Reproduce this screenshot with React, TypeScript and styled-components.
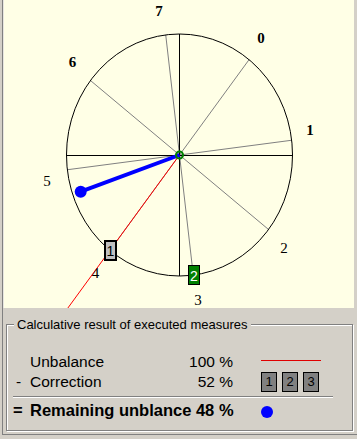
import React from "react";
import styled, { createGlobalStyle } from "styled-components";

const GlobalStyle = createGlobalStyle`
  html, body {
    margin: 0;
    padding: 0;
    background: #d4d0c8;
  }
  body {
    font-family: "Liberation Sans", Arial, sans-serif;
    color: #000;
  }
`;

const Frame = styled.div`
  box-sizing: border-box;
  width: 355px;
  height: 435px;
  margin-left: 2px;
  border-left: 1px solid #808080;
  border-bottom: 1px solid #808080;
  display: flex;
  flex-direction: column;
`;

const Canvas = styled.div`
  box-sizing: border-box;
  width: 351px;
  height: 308px;
  border-left: 1px solid #e8e6e0;
  background: #ffffe6;
  overflow: hidden;

  svg {
    display: block;
  }
`;

const GroupBox = styled.div`
  position: relative;
  box-sizing: border-box;
  width: 347px;
  height: 107px;
  margin: 16px 0 0 3px;
  padding: 27px 0 0 6px;
  border: 1px solid #808080;
  box-shadow: inset 1px 1px 0 #fff, 1px 1px 0 #fff;
`;

const Legend = styled.span`
  position: absolute;
  top: -8px;
  left: 7px;
  padding: 0 3px;
  background: #d4d0c8;
  font-size: 13px;
  line-height: 15px;
  white-space: nowrap;
`;

const Rows = styled.div`
  display: grid;
  width: 308px;
  grid-template-columns: 17px 1fr auto 88px;
  grid-template-rows: 20px 20px 8px 20px;
  align-items: center;
  font-size: 15.5px;
`;

const Sign = styled.div<{ $shift?: number; $bold?: boolean }>`
  padding-left: ${(p) => p.$shift ?? 0}px;
  font-weight: ${(p) => (p.$bold ? 700 : 400)};
  font-size: ${(p) => (p.$bold ? 16.5 : 15.5)}px;
`;

const Label = styled.div`
  white-space: nowrap;
`;

const Value = styled.div`
  text-align: right;
  white-space: nowrap;
`;

const Total = styled.div`
  grid-column: 2 / 4;
  font-weight: 700;
  font-size: 16.5px;
  white-space: nowrap;
`;

const Indicator = styled.div`
  display: flex;
  align-items: center;
  gap: 5px;
  margin-left: 28px;
  height: 20px;
`;

const RedLine = styled.div`
  width: 60px;
  height: 1px;
  margin-bottom: 4px;
  background: #e00000;
`;

const StepBox = styled.div`
  box-sizing: border-box;
  width: 16px;
  height: 20px;
  border: 1px solid #000;
  background: #808080;
  font-size: 13px;
  line-height: 18px;
  text-align: center;
`;

const Divider = styled.div`
  grid-column: 1 / -1;
  align-self: start;
  height: 1px;
  margin: 4px -12px 0 0;
  background: #808080;
  box-shadow: 0 1px 0 #fff;
`;

const Dot = styled.div`
  width: 12px;
  height: 12px;
  margin-top: 4px;
  border-radius: 50%;
  background: #0000ff;
`;

const CX = 179.5;
const CY = 155;
const RX = 113;
const RY = 121;

const spokes = Array.from({ length: 8 }, (_, k) => {
  const a = ((-7 + 45 * k) * Math.PI) / 180;
  return { x: CX + RX * Math.sin(a), y: CY - RY * Math.cos(a) };
});

const labels = [
  { t: "7", x: 159, y: 11, bold: true },
  { t: "0", x: 261, y: 38, bold: true },
  { t: "6", x: 72.5, y: 62, bold: true },
  { t: "1", x: 310, y: 130, bold: true },
  { t: "5", x: 47, y: 181, bold: false },
  { t: "2", x: 284, y: 248, bold: false },
  { t: "4", x: 95.5, y: 273, bold: false },
  { t: "3", x: 198, y: 300, bold: false },
];

const Dial = () => (
  <svg width={350} height={308} viewBox="4 0 350 308">
    {spokes.map((p, i) => (
      <line key={i} x1={CX} y1={CY} x2={p.x} y2={p.y} stroke="#808080" strokeWidth={1} />
    ))}
    <line x1={CX - RX} y1={CY + 0.5} x2={CX + RX} y2={CY + 0.5} stroke="#000" strokeWidth={1} />
    <line x1={CX} y1={CY - RY} x2={CX} y2={CY + RY} stroke="#000" strokeWidth={1} />
    <ellipse cx={CX} cy={CY} rx={RX} ry={RY} fill="none" stroke="#000" strokeWidth={1} />
    <line x1={CX} y1={CY} x2={60} y2={318.8} stroke="#ff0000" strokeWidth={1} />
    <line x1={CX} y1={CY} x2={80.7} y2={191.7} stroke="#0000ff" strokeWidth={4} />
    <circle cx={80.7} cy={191.7} r={6} fill="#0000ff" />
    <rect x={105} y={241} width={11} height={19} fill="#c0c0c0" stroke="#000" strokeWidth={2} />
    <text x={110.5} y={251} fontFamily="Liberation Sans, Arial, sans-serif" fontSize={14} textAnchor="middle" dominantBaseline="central" fill="#000">1</text>
    <rect x={188.5} y={265.5} width={11} height={19} fill="#008000" stroke="#000" strokeWidth={1} />
    <text x={194} y={275.5} fontFamily="Liberation Sans, Arial, sans-serif" fontSize={14} textAnchor="middle" dominantBaseline="central" fill="#fff">2</text>
    <circle cx={CX} cy={CY} r={3.5} fill="none" stroke="#008000" strokeWidth={2} />
    {labels.map((l) => (
      <text
        key={l.t}
        x={l.x}
        y={l.y}
        fontFamily="Liberation Serif, Times New Roman, serif"
        fontSize={15}
        fontWeight={l.bold ? 700 : 400}
        textAnchor="middle"
        dominantBaseline="central"
        fill="#000"
      >
        {l.t}
      </text>
    ))}
  </svg>
);

const App = () => (
  <>
    <GlobalStyle />
    <Frame>
      <Canvas>
        <Dial />
      </Canvas>
      <GroupBox>
        <Legend>Calculative result of executed measures</Legend>
        <Rows>
          <Sign />
          <Label>Unbalance</Label>
          <Value>100 %</Value>
          <Indicator>
            <RedLine />
          </Indicator>

          <Sign $shift={3}>-</Sign>
          <Label>Correction</Label>
          <Value>52 %</Value>
          <Indicator>
            <StepBox>1</StepBox>
            <StepBox>2</StepBox>
            <StepBox>3</StepBox>
          </Indicator>

          <Divider />

          <Sign $bold>=</Sign>
          <Total>Remaining unblance 48 %</Total>
          <Indicator>
            <Dot />
          </Indicator>
        </Rows>
      </GroupBox>
    </Frame>
  </>
);

export default App;
